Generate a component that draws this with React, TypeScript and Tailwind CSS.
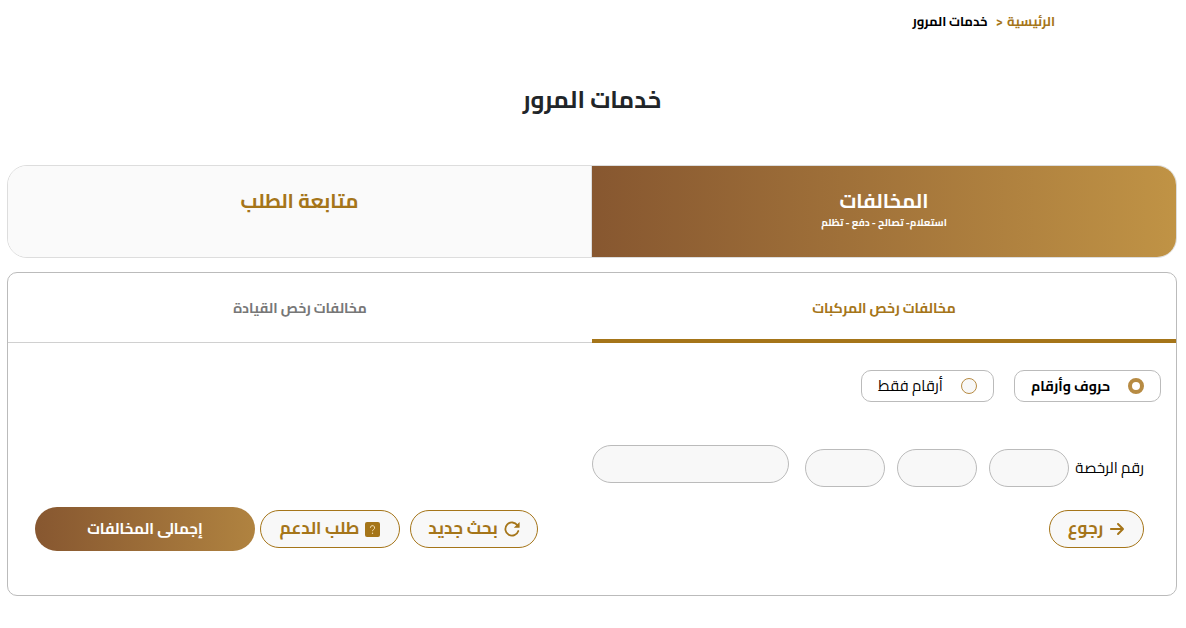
import { useState } from "react";
import { FaArrowRight } from "react-icons/fa6";

const outlineButton =
  "flex h-[38px] items-center justify-center gap-1.5 whitespace-nowrap rounded-[19px] border border-[#a57519] bg-[#f8f8f8] text-[17px] font-bold text-[#a57519]";

const smallField = "h-[38px] w-20 rounded-[19px] border border-[#bbb] bg-[#f8f8f8] text-center text-base";

function RefreshIcon() {
  return (
    <svg width="16" height="16" viewBox="0 0 16 16" fill="none" aria-hidden="true">
      <path d="M13.4 4.3A6.6 6.6 0 1 0 14.3 10" stroke="currentColor" strokeWidth="1.8" strokeLinecap="round" />
      <path d="M15.6.9v5.3a.5.5 0 0 1-.5.5H9.8z" fill="currentColor" />
    </svg>
  );
}

function HelpIcon() {
  return (
    <svg width="15" height="15" viewBox="0 0 15 15" fill="none" aria-hidden="true">
      <rect width="15" height="15" rx="2" fill="#a57519" />
      <path d="M5.4 5.8a2.1 2.1 0 1 1 3.2 1.7c-.8.5-1.1.8-1.1 1.7" stroke="#f3dfb5" strokeWidth="1" />
      <circle cx="7.5" cy="11.2" r=".7" fill="#f3dfb5" />
    </svg>
  );
}

type RadioOptionProps = {
  id: string;
  label: string;
  checked: boolean;
  onSelect: () => void;
  className: string;
};

function RadioOption({ id, label, checked, onSelect, className }: RadioOptionProps) {
  return (
    <label
      htmlFor={id}
      className={`flex h-8 items-center justify-between whitespace-nowrap rounded-[10px] border border-[#bbb] px-4 text-black ${className}`}
    >
      <input
        id={id}
        type="radio"
        name="plate-type"
        checked={checked}
        onChange={onSelect}
        className="size-4 shrink-0 appearance-none rounded-full border border-[#b78b43] bg-[#f8f8f8] checked:border-4 checked:bg-white"
      />
      <span>{label}</span>
    </label>
  );
}

export default function App() {
  const [plateType, setPlateType] = useState("mixed");

  return (
    <div dir="rtl" className="bg-white pr-[9px] pb-8 pl-[7px] font-['Cairo','DejaVu_Sans',sans-serif] text-[#212529]">
      <nav className="flex h-11 items-center gap-1 pr-[122px] text-[13px] font-bold">
        <a href="#home" className="text-[#a57519]">الرئيسية</a>
        <span className="text-[#a57519]">&lt;</span>
        <span className="pr-1 text-black">خدمات المرور</span>
      </nav>

      <h1 className="mt-9 text-center text-2xl leading-10 font-bold">خدمات المرور</h1>

      <div className="mt-[45px] grid h-[93px] grid-cols-2 overflow-hidden rounded-[20px] border border-[#ddd] text-center">
        <button className="flex flex-col items-center bg-linear-to-l from-[#c09345] to-[#875730] pt-5 text-white">
          <span className="text-xl leading-[30px] font-bold">المخالفات</span>
          <span className="text-[10px] leading-[14px] font-bold">استعلام- تصالح - دفع - تظلم</span>
        </button>
        <button className="flex flex-col items-center border-r border-[#ddd] bg-[#fafafa] pt-5 text-[#a57519]">
          <span className="text-xl leading-[30px] font-bold">متابعة الطلب</span>
        </button>
      </div>

      <main className="mt-3.5 rounded-[10px] border border-[#bbb] pb-11">
        <div className="grid h-[70px] grid-cols-2 text-sm font-bold">
          <button className="border-b-4 border-[#a57519] pt-1 text-[#a57519]">مخالفات رخص المركبات</button>
          <button className="border-b border-[#d0d0d0] text-[#777]">مخالفات رخص القيادة</button>
        </div>

        <div className="mt-[27px] flex gap-5 pr-[15px]">
          <RadioOption
            id="mixed"
            label="حروف وأرقام"
            checked={plateType === "mixed"}
            onSelect={() => setPlateType("mixed")}
            className="w-[147px] text-sm font-bold"
          />
          <RadioOption
            id="numbers"
            label="أرقام فقط"
            checked={plateType === "numbers"}
            onSelect={() => setPlateType("numbers")}
            className="w-[133px] text-[15px]"
          />
        </div>

        <div className="mt-[43px] flex items-start gap-4 pr-8">
          <div className="flex items-center pt-1">
            <label htmlFor="letter-1" className="w-[75px] whitespace-nowrap text-[15px] text-black">رقم الرخصة</label>
            <div className="flex gap-3">
              <input id="letter-1" type="text" className={smallField} />
              <input type="text" aria-label="الحرف الثاني" className={smallField} />
              <input type="text" aria-label="الحرف الثالث" className={smallField} />
            </div>
          </div>
          <input
            type="text"
            aria-label="الأرقام"
            className="h-[38px] w-[197px] rounded-[19px] border border-[#bbb] bg-[#f8f8f8] px-4 text-base"
          />
        </div>

        <div className="mt-5 flex items-center justify-between pr-8 pl-[27px]">
          <button className={`${outlineButton} w-[95px]`}>
            <FaArrowRight size={16} />
            رجوع
          </button>
          <div className="flex items-center gap-[5px]">
            <button className={`${outlineButton} ml-[5px] w-32`}>
              <RefreshIcon />
              بحث جديد
            </button>
            <button className={`${outlineButton} w-[140px]`}>
              <HelpIcon />
              طلب الدعم
            </button>
            <button className="h-11 w-[220px] rounded-[22px] bg-linear-to-l from-[#b08340] to-[#875730] text-[15px] font-bold text-white">
              إجمالى المخالفات
            </button>
          </div>
        </div>
      </main>
    </div>
  );
}
